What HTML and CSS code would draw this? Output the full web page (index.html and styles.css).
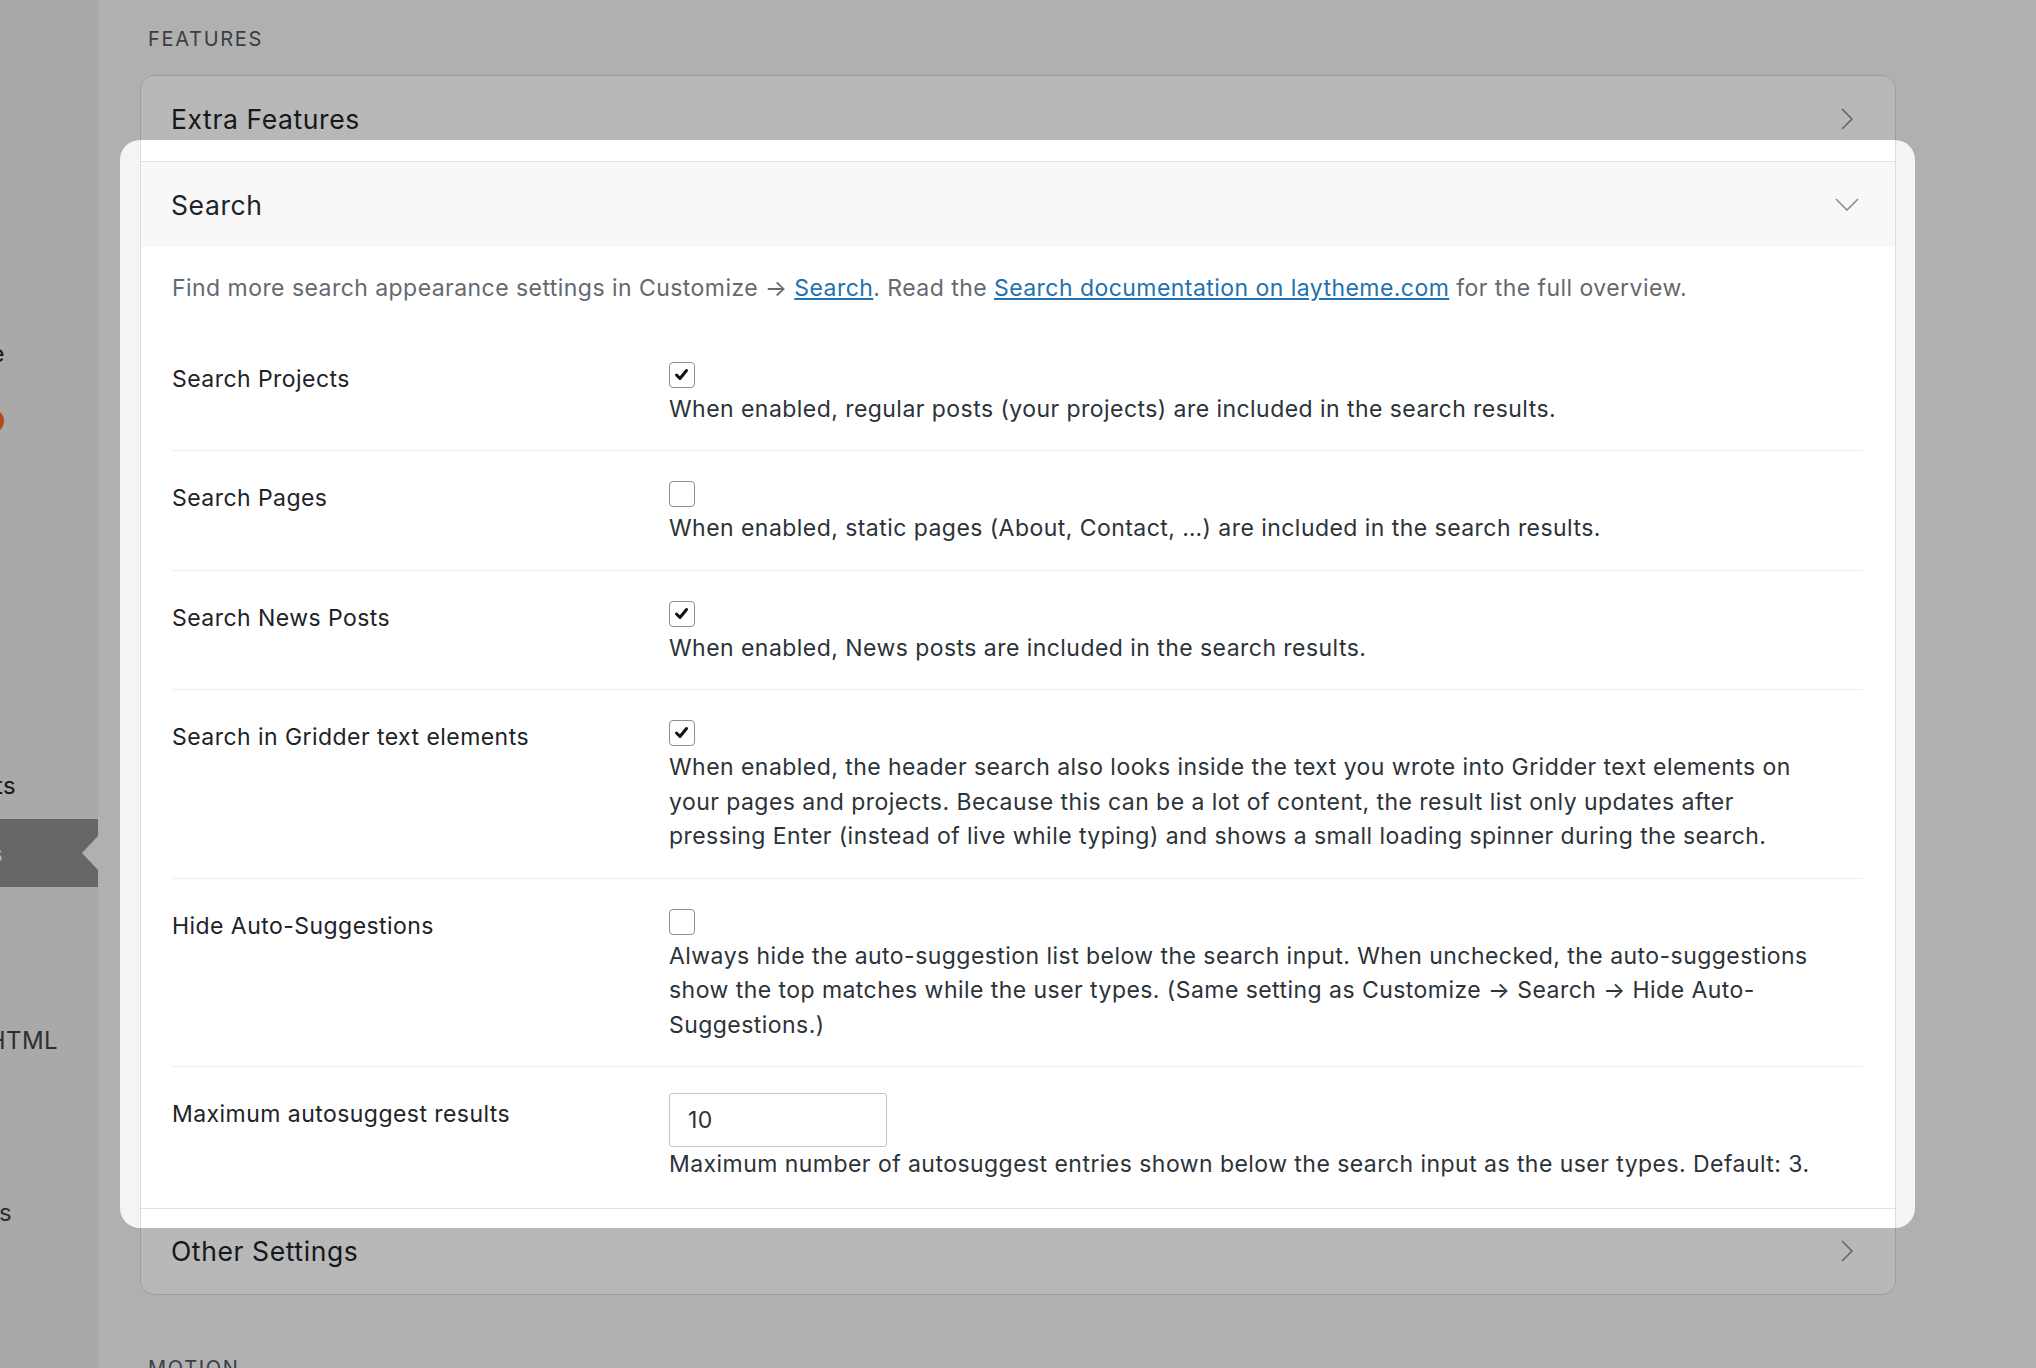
FILE: index.html
```html
<!DOCTYPE html>
<html lang="en">

<head>
    <meta charset="UTF-8">
    <meta name="viewport" content="width=device-width, initial-scale=1.0">
    <title>Lay Options – Search</title>
    <link rel="stylesheet" href="styles.css">
</head>

<body>
    <nav class="admin-menu">
        <div class="menu-item item-customize">Customize</div>
        <div class="menu-item item-plugins">Plugins <span class="badge"></span></div>
        <div class="menu-item item-fonts">Webfonts</div>
        <div class="menu-item current">Lay Options</div>
        <div class="menu-item sub item-html">Custom HTML</div>
        <div class="menu-item sub item-settings">Settings</div>
    </nav>

    <main class="content">
        <h2 class="section-title">Features</h2>

        <div class="panel">
            <div class="panel-section">
                <div class="panel-header">
                    <span>Extra Features</span>
                    <span class="chevron">
                        <svg width="14" height="24" viewBox="0 0 14 24"><polyline points="2,2 12,12 2,22" /></svg>
                    </span>
                </div>
            </div>

            <div class="panel-section open">
                <div class="panel-header">
                    <span>Search</span>
                    <span class="chevron">
                        <svg width="26" height="16" viewBox="0 0 26 16"><polyline points="2,2 13,13 24,2" /></svg>
                    </span>
                </div>

                <div class="panel-body">
                    <p class="intro">Find more search appearance settings in Customize → <a href="#">Search</a>. Read the <a href="#">Search documentation on laytheme.com</a> for the full overview.</p>

                    <div class="setting-row">
                        <div class="setting-label">Search Projects</div>
                        <div class="setting-field">
                            <span class="checkbox"><svg width="23" height="23" viewBox="0 0 23 23"><polyline points="6.5,12 10,15.5 16.5,7.5" /></svg></span>
                            <p class="description">When enabled, regular posts (your projects) are included in the search results.</p>
                        </div>
                    </div>

                    <div class="setting-row">
                        <div class="setting-label">Search Pages</div>
                        <div class="setting-field">
                            <span class="checkbox"></span>
                            <p class="description">When enabled, static pages (About, Contact, …) are included in the search results.</p>
                        </div>
                    </div>

                    <div class="setting-row">
                        <div class="setting-label">Search News Posts</div>
                        <div class="setting-field">
                            <span class="checkbox"><svg width="23" height="23" viewBox="0 0 23 23"><polyline points="6.5,12 10,15.5 16.5,7.5" /></svg></span>
                            <p class="description">When enabled, News posts are included in the search results.</p>
                        </div>
                    </div>

                    <div class="setting-row">
                        <div class="setting-label">Search in Gridder text elements</div>
                        <div class="setting-field">
                            <span class="checkbox"><svg width="23" height="23" viewBox="0 0 23 23"><polyline points="6.5,12 10,15.5 16.5,7.5" /></svg></span>
                            <p class="description">When enabled, the header search also looks inside the text you wrote into Gridder text elements on your pages and projects. Because this can be a lot of content, the result list only updates after pressing Enter (instead of live while typing) and shows a small loading spinner during the search.</p>
                        </div>
                    </div>

                    <div class="setting-row">
                        <div class="setting-label">Hide Auto-Suggestions</div>
                        <div class="setting-field">
                            <span class="checkbox"></span>
                            <p class="description">Always hide the auto-suggestion list below the search input. When unchecked, the auto-suggestions show the top matches while the user types. (Same setting as Customize → Search → Hide Auto-Suggestions.)</p>
                        </div>
                    </div>

                    <div class="setting-row last">
                        <div class="setting-label">Maximum autosuggest results</div>
                        <div class="setting-field">
                            <input class="number-input" type="text" value="10">
                            <p class="description">Maximum number of autosuggest entries shown below the search input as the user types. Default: 3.</p>
                        </div>
                    </div>
                </div>
            </div>

            <div class="panel-section">
                <div class="panel-header">
                    <span>Other Settings</span>
                    <span class="chevron">
                        <svg width="14" height="24" viewBox="0 0 14 24"><polyline points="2,2 12,12 2,22" /></svg>
                    </span>
                </div>
            </div>
        </div>

        <h2 class="section-title">Motion</h2>
    </main>

    <div class="spotlight"></div>
</body>

</html>
```

FILE: styles.css
```css
* {
    box-sizing: border-box;
    margin: 0;
    padding: 0;
}

html,
body {
    height: 100%;
    overflow: hidden;
}

body {
    font-family: Inter, 'Liberation Sans', sans-serif;
    background-color: #f4f4f4;
    color: #1d2327;
    display: flex;
    position: relative;
}

/* left admin menu, mostly scrolled out of view */
.admin-menu {
    width: 98px;
    flex-shrink: 0;
    background-color: #ebebeb;
    padding-top: 319px;
    overflow: hidden;
    font-size: 24px;
    letter-spacing: 0.4px;
}

.menu-item {
    height: 68px;
    display: flex;
    align-items: center;
    justify-content: flex-end;
    white-space: nowrap;
    position: relative;
}

.menu-item.sub {
    color: #3c434a;
}

.item-customize {
    padding-right: 93px;
}

.item-plugins {
    padding-right: 94px;
}

.badge {
    display: inline-block;
    flex-shrink: 0;
    width: 24px;
    height: 24px;
    margin-left: 8px;
    border-radius: 50%;
    background-color: #f26d21;
}

.item-fonts {
    margin-top: 296px;
    padding-right: 82px;
}

.menu-item.current {
    background-color: #8e8e8e;
    color: #fff;
    padding-right: 95px;
}

.menu-item.current::after {
    content: '';
    position: absolute;
    right: 0;
    top: 50%;
    margin-top: -17px;
    border-top: 17px solid transparent;
    border-bottom: 17px solid transparent;
    border-right: 16px solid #f4f4f4;
}

.item-html {
    margin-top: 119px;
    padding-right: 40px;
}

.item-settings {
    margin-top: 104px;
    padding-right: 86px;
}

/* main settings column */
.content {
    flex: 1;
    padding: 24px 140px 0 42px;
}

.section-title {
    font-size: 20px;
    font-weight: 400;
    line-height: 30px;
    letter-spacing: 1.7px;
    text-transform: uppercase;
    color: #50575e;
    padding-left: 8px;
    margin-bottom: 21px;
}

.panel {
    background: #fff;
    border: 1px solid #dcdcde;
    border-radius: 14px;
    overflow: hidden;
    margin-bottom: 58px;
}

.panel-section + .panel-section {
    border-top: 1px solid #e2e2e4;
}

.panel-header {
    height: 85px;
    display: flex;
    align-items: center;
    justify-content: space-between;
    padding: 0 34px 0 30px;
    font-size: 26.5px;
    letter-spacing: 0.6px;
    color: #1d2327;
}

.open .panel-header {
    background-color: #f8f8f8;
}

.chevron {
    width: 28px;
    display: flex;
    justify-content: center;
}

.chevron polyline {
    fill: none;
    stroke: #8c8f94;
    stroke-width: 1.6;
}

.panel-body {
    padding: 24px 32px 0 31px;
    font-size: 23px;
    line-height: 1.5;
    letter-spacing: 0.45px;
}

.intro {
    color: #646970;
    margin-bottom: 26px;
}

.intro a {
    color: #2271b1;
}

.setting-row {
    display: grid;
    grid-template-columns: 497px 1fr;
    padding: 30px 0 24px;
    border-bottom: 1px solid #ededed;
}

.setting-row.last {
    border-bottom: none;
    padding-bottom: 26px;
}

.setting-label {
    color: #1d2327;
}

.checkbox {
    display: block;
    width: 26px;
    height: 26px;
    border: 1.5px solid #8c8f94;
    border-radius: 4px;
    background: #fff;
    margin-bottom: 4px;
}

.checkbox svg {
    display: block;
}

.checkbox polyline {
    fill: none;
    stroke: #111;
    stroke-width: 3;
    stroke-linecap: round;
    stroke-linejoin: round;
}

.description {
    color: #2c3338;
    max-width: 1155px;
}

.number-input {
    display: block;
    width: 218px;
    height: 54px;
    margin-top: -4px;
    padding: 0 18px;
    border: 1px solid #c3c4c7;
    border-radius: 3px;
    font-family: inherit;
    font-size: 23px;
    letter-spacing: 0.45px;
    color: #2c3338;
    background: #fff;
}

/* dimmed page with the search panel highlighted */
.spotlight {
    position: absolute;
    left: 120px;
    top: 140px;
    width: 1795px;
    height: 1088px;
    border-radius: 20px;
    box-shadow: 0 0 0 2600px rgba(0, 0, 0, 0.28);
    pointer-events: none;
}
```
